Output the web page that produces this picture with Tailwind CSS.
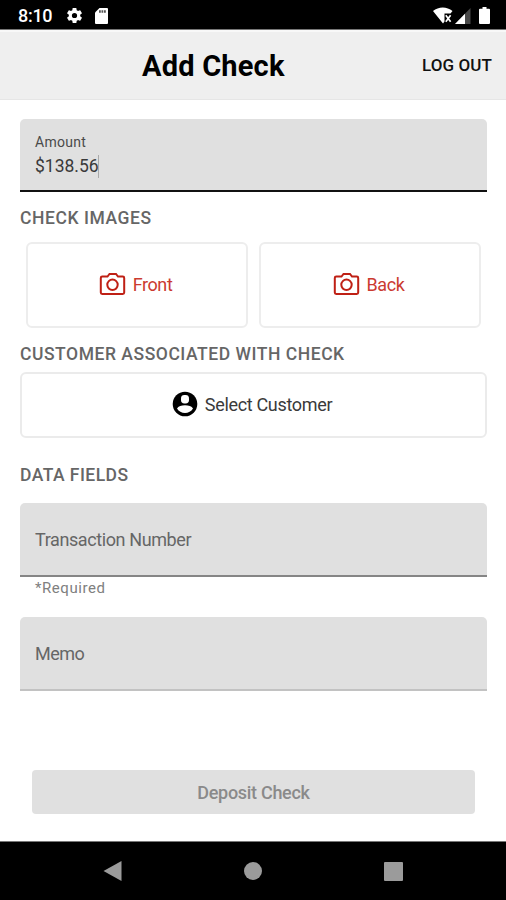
<!DOCTYPE html>
<html lang="en">
<head>
<meta charset="utf-8">
<title>Add Check</title>
<script src="https://cdn.jsdelivr.net/npm/@tailwindcss/browser@4"></script>
</head>
<body class="bg-white">
<div class="w-[506px] h-[900px] flex flex-col overflow-hidden bg-white font-['Roboto',sans-serif] whitespace-nowrap">
  <div class="h-[30px] shrink-0 bg-black border-b border-[#777] flex items-center pl-[18px] pr-[16px] pt-[2px] text-white">
    <span class="text-[18px] font-medium leading-none tracking-[-0.3px] w-[47px]">8:10</span>
    <svg class="size-[19px]" viewBox="0 0 24 24" fill="#fff"><path d="M19.14 12.94c.04-.3.06-.61.06-.94s-.02-.64-.07-.94l2.03-1.58a.49.49 0 0 0 .12-.61l-1.92-3.32a.49.49 0 0 0-.59-.22l-2.39.96a7 7 0 0 0-1.62-.94l-.36-2.54A.48.48 0 0 0 13.92 2.4h-3.84c-.24 0-.43.17-.47.41l-.36 2.54c-.59.24-1.13.57-1.62.94l-2.39-.96a.48.48 0 0 0-.59.22L2.74 8.87a.48.48 0 0 0 .12.61l2.03 1.58a6 6 0 0 0 0 1.88l-2.03 1.58a.49.49 0 0 0-.12.61l1.92 3.32c.12.22.37.29.59.22l2.39-.96c.5.38 1.03.7 1.62.94l.36 2.54c.05.24.24.41.48.41h3.84c.24 0 .44-.17.47-.41l.36-2.54a7 7 0 0 0 1.62-.94l2.39.96c.22.08.47 0 .59-.22l1.92-3.32a.48.48 0 0 0-.12-.61zM12 15.3a3.3 3.3 0 1 1 0-6.600 3.300 3.300 0 0 1 0 6.600z"/></svg>
    <svg class="ml-[11px] w-[13px] h-[16px]" viewBox="0 0 13 16"><path d="M4.500 0H12a1 1 0 0 1 1 1v14a1 1 0 0 1-1 1H1a1 1 0 0 1-1-1V4.500z" fill="#fff"/><path d="M4 3.500h7" stroke="#555" stroke-width="2.500" stroke-dasharray="1.800 .7"/></svg>
    <svg class="ml-auto w-[20px] h-[17px]" viewBox="0 0 20 17"><path d="M0 4C5.500-.7 14-.7 19.500 4l-2 2.500h-6v8L10 16.500z" fill="#fff"/><path d="M12.800 8.300l4.800 6.400M17.600 8.300l-4.800 6.400" stroke="#fff" stroke-width="1.700"/></svg>
    <svg class="ml-[2px] w-[16px] h-[16px]" viewBox="0 0 16 16"><path d="M15.500 0v16H0z" fill="#484848"/><path d="M10 5.700V16H0z" fill="#fff"/></svg>
    <svg class="ml-[8px] w-[11px] h-[17px]" viewBox="0 0 11 17"><path d="M3.500 0h4v1.800H10a1 1 0 0 1 1 1V16a1 1 0 0 1-1 1H1a1 1 0 0 1-1-1V2.800a1 1 0 0 1 1-1h2.500z" fill="#fff"/></svg>
  </div>
  <header class="h-[70px] shrink-0 bg-[#efefef] border-t-2 border-t-[#f8f8f8] border-b border-b-[#e6e6e6] flex items-center justify-between pl-[142px] pr-[14px]">
    <h1 class="text-[29px] font-bold text-black leading-none tracking-[0.2px] pt-[2px]">Add Check</h1>
    <button class="text-[17px] font-medium text-[#111] leading-none tracking-[0.1px]">LOG OUT</button>
  </header>
  <main class="flex-1 flex flex-col pl-5 pt-[19px] pr-[19px]">
    <div class="h-[73px] shrink-0 bg-[#e0e0e0] rounded-t-[5px] border-b-2 border-[#111] px-[15px] pt-[13px]">
      <div class="text-[14px] leading-[20px] text-[#4a4a4a] tracking-[0.3px]">Amount</div>
      <div class="text-[17.500px] leading-[28px] text-[#3a3a3a] flex items-center"><span>$138.56</span><span class="w-px h-[23px] bg-[#aaa] -ml-px"></span></div>
    </div>
    <h2 class="mt-[15px] text-[17.500px] leading-[22px] font-medium text-[#666] tracking-[0.570px]">CHECK IMAGES</h2>
    <div class="mt-[13px] h-[86px] shrink-0 grid grid-cols-2 gap-[11px] px-[6px] text-[#cb3a30]">
      <button class="border-2 border-[#ededed] rounded-[6px] flex items-center justify-center gap-[7px] text-[18px] tracking-[-0.400px] pr-[3px]">
        <svg class="size-[27px] mb-[2px]" viewBox="0 0 27 27" fill="none" stroke="#bf2015" stroke-width="2"><path d="M3.200 5.500h5.300l2-2.500h6.500l2 2.500h4.800a1.400 1.400 0 0 1 1.400 1.400v14.700a1.400 1.400 0 0 1-1.400 1.400H3.200a1.400 1.400 0 0 1-1.400-1.400V6.900a1.400 1.400 0 0 1 1.400-1.400z"/><circle cx="13.500" cy="13.800" r="5.200"/></svg>
        <span class="pb-px">Front</span>
      </button>
      <button class="border-2 border-[#ededed] rounded-[6px] flex items-center justify-center gap-[7px] text-[18px] tracking-[-0.400px] pr-[3px]">
        <svg class="size-[27px] mb-[2px]" viewBox="0 0 27 27" fill="none" stroke="#bf2015" stroke-width="2"><path d="M3.200 5.500h5.300l2-2.500h6.500l2 2.500h4.800a1.400 1.400 0 0 1 1.400 1.400v14.700a1.400 1.400 0 0 1-1.400 1.400H3.200a1.400 1.400 0 0 1-1.400-1.400V6.900a1.400 1.400 0 0 1 1.400-1.400z"/><circle cx="13.500" cy="13.800" r="5.200"/></svg>
        <span class="pb-px">Back</span>
      </button>
    </div>
    <h2 class="mt-[15px] text-[17.500px] leading-[22px] font-medium text-[#666] tracking-[0.540px]">CUSTOMER ASSOCIATED WITH CHECK</h2>
    <button class="mt-[7px] h-[66px] shrink-0 border-2 border-[#ebebeb] rounded-[6px] flex items-center justify-center gap-[7px] text-[18px] tracking-[-0.330px] text-[#3a3a3a] pr-[3px]">
      <svg class="size-[26px] mb-[2px]" viewBox="0 0 26 26"><circle cx="13" cy="13" r="12.300" fill="#000"/><rect x="9" y="4" width="8" height="8.400" rx="3.400" fill="#fff"/><path d="M5 17.500c1.200-2 4.500-3.200 8-3.200s6.800 1.200 8 3.200c-1.700 2.900-4.700 4.500-8 4.500s-6.300-1.600-8-4.500z" fill="#fff"/></svg>
      <span class="pb-px">Select Customer</span>
    </button>
    <h2 class="mt-[26px] text-[17.500px] leading-[22px] font-medium text-[#666] tracking-[0.450px]">DATA FIELDS</h2>
    <div class="mt-[17px] h-[74px] shrink-0 bg-[#e0e0e0] rounded-t-[5px] border-b-2 border-[#858585] px-[15px] flex items-center text-[18px] tracking-[-0.400px] text-[#666]">Transaction Number</div>
    <div class="pl-[15px] text-[15px] leading-[22px] text-[#808080] tracking-[0.550px]">*Required</div>
    <div class="mt-[18px] h-[74px] shrink-0 bg-[#e0e0e0] rounded-t-[5px] border-b-2 border-[#c2c2c2] px-[15px] flex items-center text-[18px] tracking-[-0.500px] text-[#666]">Memo</div>
    <button class="mt-[79px] mx-[12px] h-[44px] shrink-0 bg-[#e0e0e0] rounded-[4px] text-[18px] tracking-[-0.300px] font-medium text-[#8a8a8a]">Deposit Check</button>
  </main>
  <nav class="h-[59px] shrink-0 bg-black border-t border-[#777] grid grid-cols-[220px_66px_220px] items-center justify-items-center">
    <svg class="w-[19px] h-[22px] ml-[4px]" viewBox="0 0 19 22"><path d="M18.500 1v20L.5 11z" fill="#9b9b9b"/></svg>
    <div class="size-[18px] rounded-full bg-[#9b9b9b]"></div>
    <div class="size-[19px] rounded-[1px] bg-[#9b9b9b] mr-[5px]"></div>
  </nav>
</div>
</body>
</html>
